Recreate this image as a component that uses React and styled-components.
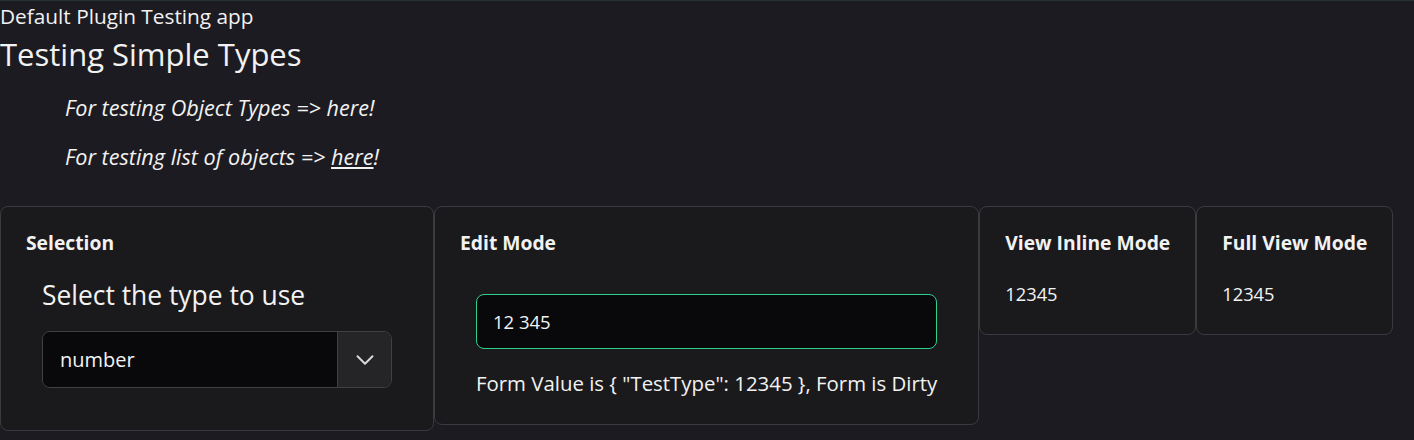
import React from 'react'
import styled, { createGlobalStyle } from 'styled-components'

const GlobalStyle = createGlobalStyle`
    html, body {
        margin: 0;
        padding: 0;
        background: #1c1b21;
        color: #f2f2f2;
        font-family: "Open Sans", "Noto Sans", sans-serif;
    }
`

function Chevron() {
    return (
        <svg width="30" height="30" viewBox="0 0 24 24" fill="none" stroke="#d8d8d8" strokeWidth="1.6" strokeLinecap="round" strokeLinejoin="round">
            <path d="M6 9l6 6 6-6" />
        </svg>
    )
}

function App() {
    return (
        <Page>
            <GlobalStyle />
            <AppName>Default Plugin Testing app</AppName>
            <Heading>Testing Simple Types</Heading>
            <Note>For testing Object Types =&gt; here!</Note>
            <Note>
                For testing list of objects =&gt; <Link>here</Link>!
            </Note>
            <Cards>
                <Card>
                    <CardTitle>Selection</CardTitle>
                    <SelectGroup>
                        <SelectLabel>Select the type to use</SelectLabel>
                        <Select>
                            <SelectValue>number</SelectValue>
                            <SelectButton>
                                <Chevron />
                            </SelectButton>
                        </Select>
                    </SelectGroup>
                </Card>
                <Card>
                    <CardTitle>Edit Mode</CardTitle>
                    <EditGroup>
                        <Input defaultValue="12 345" />
                        <FormValue>
                            Form Value is {'{'} "TestType": 12345 {'}'}, Form is Dirty
                        </FormValue>
                    </EditGroup>
                </Card>
                <Card>
                    <CardTitle>View Inline Mode</CardTitle>
                    <Value>12345</Value>
                </Card>
                <Card>
                    <CardTitle>Full View Mode</CardTitle>
                    <Value>12345</Value>
                </Card>
            </Cards>
        </Page>
    )
}

const Page = styled.div`
    border-top: 1px solid #23332f;
    min-height: 439px;
`
const AppName = styled.div`
    font-size: 20.8px;
    line-height: 32px;
    height: 32px;
    margin-top: -1px;
`
const Heading = styled.h1`
    margin: 0;
    font-size: 31px;
    font-weight: 400;
    line-height: 44px;
`
const Note = styled.p`
    margin: 15px 0 0 65px;
    font-size: 21.6px;
    font-style: italic;
    line-height: 34px;
    & + & {
        margin-top: 15px;
    }
`
const Link = styled.span`
    text-decoration: underline;
`
const Cards = styled.div`
    display: flex;
    align-items: flex-start;
    margin-top: 32px;
`
const Card = styled.div`
    background: #1a1a1d;
    border: 1px solid #3a3a40;
    border-radius: 8px;
    padding: 23px 25px 27px;
`
const CardTitle = styled.h3`
    margin: 0;
    font-size: 19.3px;
    font-weight: 700;
    line-height: 26px;
    white-space: nowrap;
`
const SelectGroup = styled.div`
    padding: 21px 16px 15px;
`
const SelectLabel = styled.div`
    font-size: 26.4px;
    line-height: 36px;
    margin-bottom: 18px;
`
const Select = styled.div`
    display: flex;
    width: 350px;
    height: 57px;
    box-sizing: border-box;
    border: 1px solid #3f3f45;
    border-radius: 8px;
    overflow: hidden;
`
const SelectValue = styled.div`
    flex: 1;
    background: #09090b;
    display: flex;
    align-items: center;
    padding-left: 17px;
    font-size: 20px;
`
const SelectButton = styled.div`
    width: 53px;
    background: #252527;
    border-left: 1px solid #3f3f45;
    display: flex;
    align-items: center;
    justify-content: center;
`
const EditGroup = styled.div`
    padding: 38px 16px 0;
`
const Input = styled.input`
    display: block;
    width: 100%;
    height: 55px;
    box-sizing: border-box;
    background: #09090b;
    border: 1px solid #2ecf90;
    border-radius: 8px;
    color: #f2f2f2;
    font-family: inherit;
    font-size: 18.5px;
    padding: 0 16px;
    outline: none;
`
const FormValue = styled.div`
    margin-top: 20px;
    font-size: 20.4px;
    line-height: 28px;
    white-space: nowrap;
`
const Value = styled.div`
    margin-top: 25px;
    font-size: 18.3px;
    line-height: 26px;
`

export default App
